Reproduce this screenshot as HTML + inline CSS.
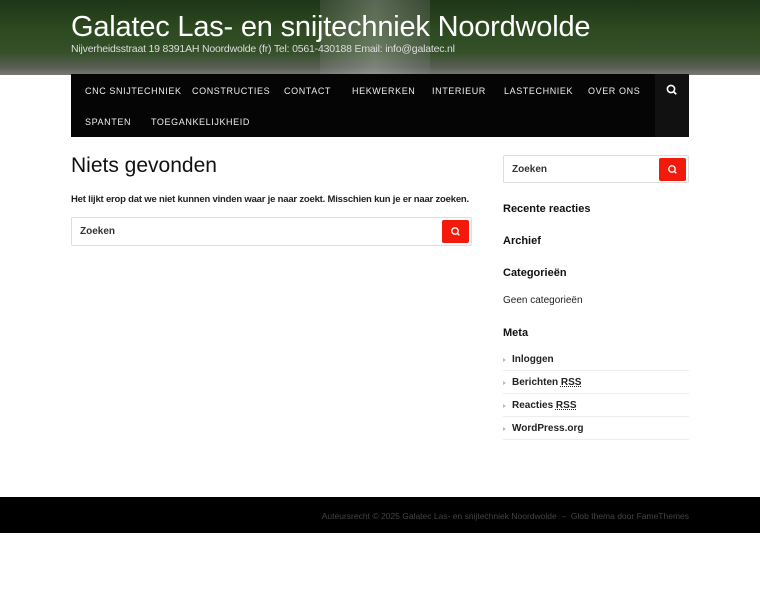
<!DOCTYPE html>
<html><head><meta charset="utf-8"><style>
*{margin:0;padding:0;box-sizing:border-box}
body{width:760px;height:600px;background:#fff;font-family:"Liberation Sans",sans-serif;color:#111;position:relative;overflow:hidden}
.hdr{position:absolute;left:0;top:0;width:760px;height:75px;background:linear-gradient(180deg,#1f3517 0%,#2d4a20 40%,#35502a 70%,#5a5e55 90%,#7a7a74 100%)}
.hdr:before{content:"";position:absolute;left:320px;top:0;width:110px;height:75px;background:linear-gradient(90deg,rgba(150,150,150,.2),rgba(200,200,200,.35),rgba(120,120,120,.3))}
.t{position:absolute;left:71px;top:11px;font-size:29px;color:#fff;white-space:nowrap;letter-spacing:-.2px}
.st{position:absolute;left:71px;top:43px;font-size:10.5px;color:#ddd;white-space:nowrap;letter-spacing:-.2px}
.nav{position:absolute;left:71px;top:74px;width:618px;height:63px;background:#050505}
.nav span{position:absolute;font-size:9px;color:#eee;letter-spacing:.6px}
.ns{position:absolute;left:584px;top:0;width:34px;height:63px;background:#111}
h1{position:absolute;left:71px;top:154px;font-size:21px;font-weight:normal;color:#111}
.p{position:absolute;left:71px;top:194px;font-size:9.5px;font-weight:bold;color:#222;letter-spacing:-.2px}
.sb{position:absolute;border:1px solid #ddd;border-radius:2px;background:#fff}
.sb i{position:absolute;left:8px;top:8px;font-style:normal;font-size:10px;font-weight:bold;color:#333}
.sb b{position:absolute;right:2px;top:2px;width:27px;height:23px;background:#f21a0a;border-radius:2px}
.w{position:absolute;left:503px;font-size:11px;font-weight:bold;color:#111}
.m{position:absolute;left:503px;width:186px;height:23px;border-bottom:1px solid #eee;font-size:10px;font-weight:bold;color:#222;padding:6px 0 0 9px}
.m:before{content:"";position:absolute;left:0;top:10px;border-left:3px solid #bbb;border-top:2.5px solid transparent;border-bottom:2.5px solid transparent}
.m u{text-decoration:underline dotted}
.ft{position:absolute;left:0;top:497px;width:760px;height:36px;background:#000;color:#444;font-size:8.5px;text-align:right;padding:14px 71px 0 0}
</style></head><body>
<div class="hdr"></div>
<div class="t">Galatec Las- en snijtechniek Noordwolde</div>
<div class="st">Nijverheidsstraat 19 8391AH Noordwolde (fr) Tel: 0561-430188 Email: info@galatec.nl</div>
<div class="nav">
<span style="left:14px;top:12px">CNC SNIJTECHNIEK</span>
<span style="left:121px;top:12px">CONSTRUCTIES</span>
<span style="left:213px;top:12px">CONTACT</span>
<span style="left:281px;top:12px">HEKWERKEN</span>
<span style="left:361px;top:12px">INTERIEUR</span>
<span style="left:433px;top:12px">LASTECHNIEK</span>
<span style="left:517px;top:12px">OVER ONS</span>
<span style="left:14px;top:43px">SPANTEN</span>
<span style="left:80px;top:43px">TOEGANKELIJKHEID</span>
<div class="ns"><svg width="34" height="34" viewBox="0 0 34 34" style="position:absolute;left:0;top:0"><circle cx="16" cy="15" r="3.6" fill="none" stroke="#fff" stroke-width="1.6"/><path d="M18.6 17.6l2.6 2.6" stroke="#fff" stroke-width="1.8"/></svg></div>
</div>
<h1>Niets gevonden</h1>
<div class="p">Het lijkt erop dat we niet kunnen vinden waar je naar zoekt. Misschien kun je er naar zoeken.</div>
<div class="sb" style="left:71px;top:217px;width:401px;height:29px"><i>Zoeken</i><b><svg width="27" height="23" viewBox="0 0 27 23"><circle cx="13" cy="11" r="3.2" fill="none" stroke="#fff" stroke-width="1.3"/><path d="M15.3 13.3l2 2" stroke="#fff" stroke-width="1.4"/></svg></b></div>
<div class="sb" style="left:503px;top:155px;width:186px;height:28px"><i>Zoeken</i><b><svg width="27" height="23" viewBox="0 0 27 23"><circle cx="13" cy="11" r="3.2" fill="none" stroke="#fff" stroke-width="1.3"/><path d="M15.3 13.3l2 2" stroke="#fff" stroke-width="1.4"/></svg></b></div>
<div class="w" style="top:203px">Recente reacties</div>
<div class="w" style="top:235px">Archief</div>
<div class="w" style="top:267px">Categorieën</div>
<div class="w" style="top:295px;font-weight:normal;font-size:10px;color:#222">Geen categorieën</div>
<div class="w" style="top:327px">Meta</div>
<div class="m" style="top:348px">Inloggen</div>
<div class="m" style="top:371px">Berichten <u>RSS</u></div>
<div class="m" style="top:394px">Reacties <u>RSS</u></div>
<div class="m" style="top:417px">WordPress.org</div>
<div class="ft">Auteursrecht © 2025 Galatec Las- en snijtechniek Noordwolde &nbsp;–&nbsp; Glob thema door FameThemes</div>
</body></html>
